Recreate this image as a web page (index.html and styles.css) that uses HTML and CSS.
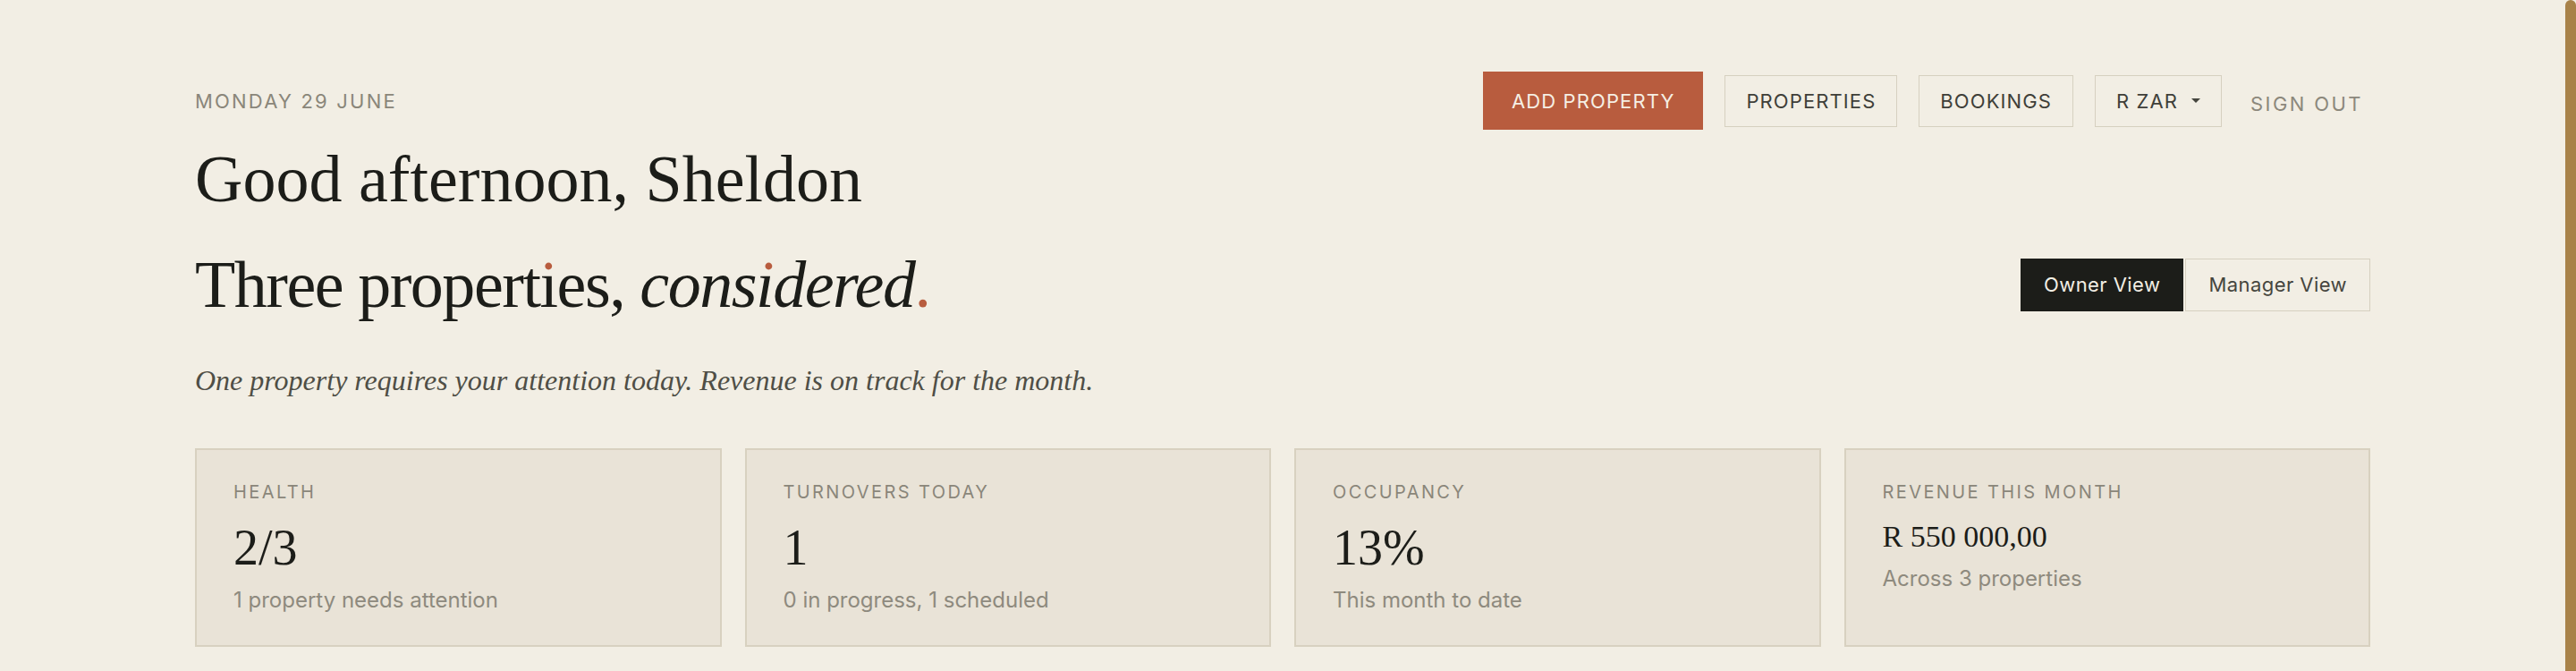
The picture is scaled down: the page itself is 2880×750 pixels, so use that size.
FILE: index.html
```html
<!DOCTYPE html>
<html lang="en">
<head>
<meta charset="utf-8">
<title>Dashboard</title>
<link rel="stylesheet" href="styles.css">
</head>
<body>
<div class="shell">
  <main class="main">
    <div class="container">
      <div class="top-row">
        <div class="date">MONDAY 29 JUNE</div>
        <nav class="nav">
          <button class="btn btn-primary">ADD PROPERTY</button>
          <button class="btn">PROPERTIES</button>
          <button class="btn">BOOKINGS</button>
          <button class="btn btn-currency">R ZAR <span class="caret"></span></button>
          <button class="signout">SIGN OUT</button>
        </nav>
      </div>
      <h1 class="greeting">Good afternoon, Sheldon</h1>
      <div class="title-row">
        <h2 class="headline">Three propert<span class="ri">i</span>es, <em>cons<span class="ri">i</span>dered</em><span class="accent">.</span></h2>
        <div class="toggle">
          <button class="toggle-btn active">Owner View</button>
          <button class="toggle-btn">Manager View</button>
        </div>
      </div>
      <p class="summary">One property requires your attention today. Revenue is on track for the month.</p>
      <section class="cards">
        <div class="card">
          <div class="card-label">HEALTH</div>
          <div class="card-value">2/3</div>
          <div class="card-sub">1 property needs attention</div>
        </div>
        <div class="card">
          <div class="card-label">TURNOVERS TODAY</div>
          <div class="card-value">1</div>
          <div class="card-sub">0 in progress, 1 scheduled</div>
        </div>
        <div class="card">
          <div class="card-label">OCCUPANCY</div>
          <div class="card-value">13%</div>
          <div class="card-sub">This month to date</div>
        </div>
        <div class="card">
          <div class="card-label">REVENUE THIS MONTH</div>
          <div class="card-value card-value-sm">R 550 000,00</div>
          <div class="card-sub">Across 3 properties</div>
        </div>
      </section>
    </div>
  </main>
  <div class="rail"></div>
</div>
</body>
</html>
```
FILE: styles.css
```css
html, body {
  margin: 0;
  padding: 0;
  height: 100%;
}
body {
  background: #f2eee4;
  color: #1c1d19;
  font-family: "Inter", "Liberation Sans", sans-serif;
  overflow: hidden;
}
.shell {
  display: flex;
  height: 100vh;
}
.main {
  flex: 1;
  min-width: 0;
}
.rail {
  width: 12px;
  background: #a88249;
  border-radius: 6px 6px 0 0;
}
.container {
  max-width: 2432px;
  margin: 0 auto;
  padding-top: 80px;
}
.top-row {
  display: flex;
  justify-content: space-between;
  align-items: center;
}
.date {
  font-size: 22px;
  letter-spacing: 0.1em;
  color: #8a867a;
}
.nav {
  display: flex;
  align-items: center;
  gap: 24px;
}
.btn {
  font-family: "Inter", "Liberation Sans", sans-serif;
  font-size: 22px;
  letter-spacing: 0.05em;
  color: #3f3f39;
  background: transparent;
  border: 1px solid #d6d0c0;
  height: 58px;
  padding: 0 23px;
  display: flex;
  align-items: center;
  cursor: pointer;
}
.btn-primary {
  background: #b85c3e;
  border-color: #b85c3e;
  color: #f5efe4;
  height: 65px;
  padding: 0 31px;
}
.btn-currency {
  gap: 15px;
}
.caret {
  width: 0;
  height: 0;
  border-left: 5px solid transparent;
  border-right: 5px solid transparent;
  border-top: 5px solid #45453e;
}
.signout {
  font-family: "Inter", "Liberation Sans", sans-serif;
  font-size: 22px;
  letter-spacing: 0.11em;
  color: #8c887c;
  background: none;
  border: none;
  padding: 7px 8px 0;
  cursor: pointer;
}
.greeting {
  font-family: "Liberation Serif", serif;
  font-weight: 400;
  font-size: 74px;
  line-height: 90px;
  margin: 10px 0 0;
  color: #1c1d19;
}
.title-row {
  display: flex;
  justify-content: space-between;
  align-items: center;
  margin-top: 28px;
}
.headline {
  font-family: "Liberation Serif", serif;
  font-weight: 400;
  font-size: 74px;
  line-height: 90px;
  letter-spacing: -0.02em;
  margin: 0;
  color: #1c1d19;
}
.headline em {
  font-style: italic;
}
.ri {
  background: linear-gradient(to bottom, #b85c3e 0, #b85c3e 0.38em, #1c1d19 0.38em);
  -webkit-background-clip: text;
  background-clip: text;
  color: transparent;
}
.accent {
  color: #b85c3e;
}
.toggle {
  display: flex;
  gap: 2px;
}
.toggle-btn {
  font-family: "Inter", "Liberation Sans", sans-serif;
  font-size: 22px;
  letter-spacing: 0.02em;
  color: #45453e;
  background: transparent;
  border: 1px solid #d6d0c0;
  height: 59px;
  padding: 0 25px;
  cursor: pointer;
}
.toggle-btn.active {
  background: #1c1d19;
  border-color: #1c1d19;
  color: #f2eee4;
}
.summary {
  font-family: "Liberation Serif", serif;
  font-style: italic;
  font-size: 32px;
  line-height: 43px;
  color: #4f4e46;
  margin: 41px 0 0;
}
.cards {
  display: grid;
  grid-template-columns: repeat(4, 1fr);
  gap: 26px;
  margin-top: 54px;
}
.card {
  background: #e9e3d7;
  border: 2px solid #d8d1c0;
  padding: 35px 41px 35px;
}
.card-label {
  font-size: 20px;
  line-height: 24px;
  letter-spacing: 0.12em;
  color: #8a867a;
}
.card-value {
  font-family: "Liberation Serif", serif;
  font-size: 56px;
  line-height: 64px;
  margin-top: 18px;
  color: #1c1d19;
}
.card-value-sm {
  font-size: 34px;
  line-height: 40px;
}
.card-sub {
  font-size: 24px;
  line-height: 30px;
  color: #8e8a7e;
  margin-top: 12px;
}
```
